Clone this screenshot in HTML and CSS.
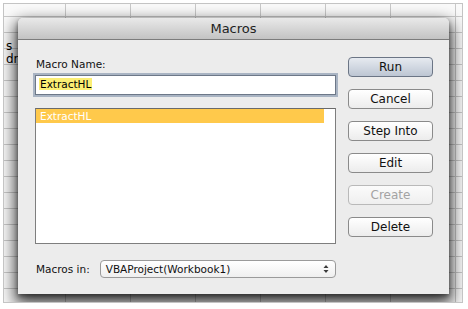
FILE: index.html
```html
<!DOCTYPE html>
<html lang="en">
<head>
  <meta charset="UTF-8">
  <meta name="viewport" content="width=device-width, initial-scale=1.0">
  <title>Macros</title>
  <link rel="stylesheet" href="styles.css">
</head>
<body>
  <div class="shot">
    <div class="cells">
      <div>s</div>
      <div>dre</div>
    </div>

    <div class="dialog">
      <div class="titlebar">Macros</div>
      <div class="body">
        <div class="main">
          <div class="label">Macro Name:</div>
          <div class="field"><span class="hl">ExtractHL</span></div>
          <div class="list">
            <div class="row selected">ExtractHL</div>
          </div>
          <div class="where">
            <span class="label">Macros in:</span>
            <div class="popup">
              <span>VBAProject(Workbook1)</span>
              <svg class="arrows" width="6" height="10" viewBox="0 0 6 10">
                <path d="M0.5 4 L3 1 L5.5 4 Z M0.5 6 L3 9 L5.5 6 Z" fill="#3a3a3a"/>
              </svg>
            </div>
          </div>
        </div>
        <div class="buttons">
          <button class="btn default">Run</button>
          <button class="btn">Cancel</button>
          <button class="btn">Step Into</button>
          <button class="btn">Edit</button>
          <button class="btn" disabled>Create</button>
          <button class="btn">Delete</button>
        </div>
      </div>
    </div>
  </div>
</body>
</html>
```

FILE: styles.css
```css
body {
  margin: 0;
  background: #fff;
  font-family: "DejaVu Sans", Verdana, sans-serif;
}
.shot {
  position: relative;
  margin: 3px;
  width: 458px;
  height: 298px;
  border: 1px solid #c4c4c4;
  overflow: hidden;
  background-color: #fafafa;
  background-image:
    linear-gradient(to right, #c9c9c9 1px, transparent 1px),
    linear-gradient(#c9c9c9 1px, transparent 1px);
  background-size: 65px 16px;
  background-position: 61px 12px;
}
.cells {
  padding-top: 36px;
  padding-left: 2px;
  font-size: 12px;
  line-height: 13px;
  color: #000;
}

.dialog {
  position: absolute;
  left: 14px;
  top: 14px;
  width: 431px;
  height: 276px;
  background: #ececec;
  border-radius: 5px 5px 0 0;
  box-shadow: 0 7px 16px 3px rgba(0, 0, 0, 0.75), 0 2px 4px rgba(0, 0, 0, 0.4);
  display: flex;
  flex-direction: column;
}
.titlebar {
  height: 21px;
  line-height: 21px;
  text-align: center;
  font-size: 13px;
  color: #222;
  border-radius: 5px 5px 0 0;
  background: linear-gradient(#e9e9e9, #c3c3c3);
  border-bottom: 1px solid #7c7c7c;
}
.body {
  flex: 1;
  display: flex;
  gap: 12px;
  padding: 17px 16px 17px 17px;
}
.main {
  width: 301px;
  display: flex;
  flex-direction: column;
}
.label {
  font-size: 10.5px;
  line-height: 14px;
  color: #111;
  padding-left: 1px;
}
.field {
  margin-top: 4px;
  height: 17px;
  background: #fff;
  border: 1px solid #6d7888;
  box-shadow: 0 0 0 2px #a9b4c3;
  padding: 1px 0 0 3px;
  font-size: 10.5px;
  line-height: 14px;
}
.hl {
  background: #fbee74;
  color: #000;
  padding: 0 1px;
}
.list {
  margin-top: 13px;
  height: 134px;
  background: #fff;
  border: 1px solid #7e7e7e;
  border-top-color: #6a6a6a;
  padding-right: 11px;
}
.row {
  height: 14px;
  line-height: 14px;
  font-size: 10.5px;
  padding-left: 4px;
}
.row.selected {
  background: #ffc94b;
  color: #fff;
}
.where {
  margin-top: 16px;
  display: flex;
  align-items: center;
  gap: 10px;
}
.popup {
  flex: 1;
  height: 16px;
  border: 1px solid #9a9a9a;
  border-radius: 4px;
  background: linear-gradient(#ffffff, #efefef);
  display: flex;
  align-items: center;
  justify-content: space-between;
  padding: 0 6px 0 5px;
  font-size: 10.5px;
  color: #111;
}
.buttons {
  width: 85px;
  display: flex;
  flex-direction: column;
  gap: 12px;
}
.btn {
  height: 20px;
  padding: 0;
  font-family: "DejaVu Sans", Verdana, sans-serif;
  font-size: 12px;
  color: #111;
  border: 1px solid #8a8a8a;
  border-radius: 4px;
  background: linear-gradient(#ffffff, #ececec);
}
.btn.default {
  border-color: #6b7585;
  background: linear-gradient(#e6eaf0, #bdc6d3);
}
.btn:disabled {
  color: #a3a3a3;
  border-color: #b9b9b9;
  background: linear-gradient(#fbfbfb, #efefef);
}
```
